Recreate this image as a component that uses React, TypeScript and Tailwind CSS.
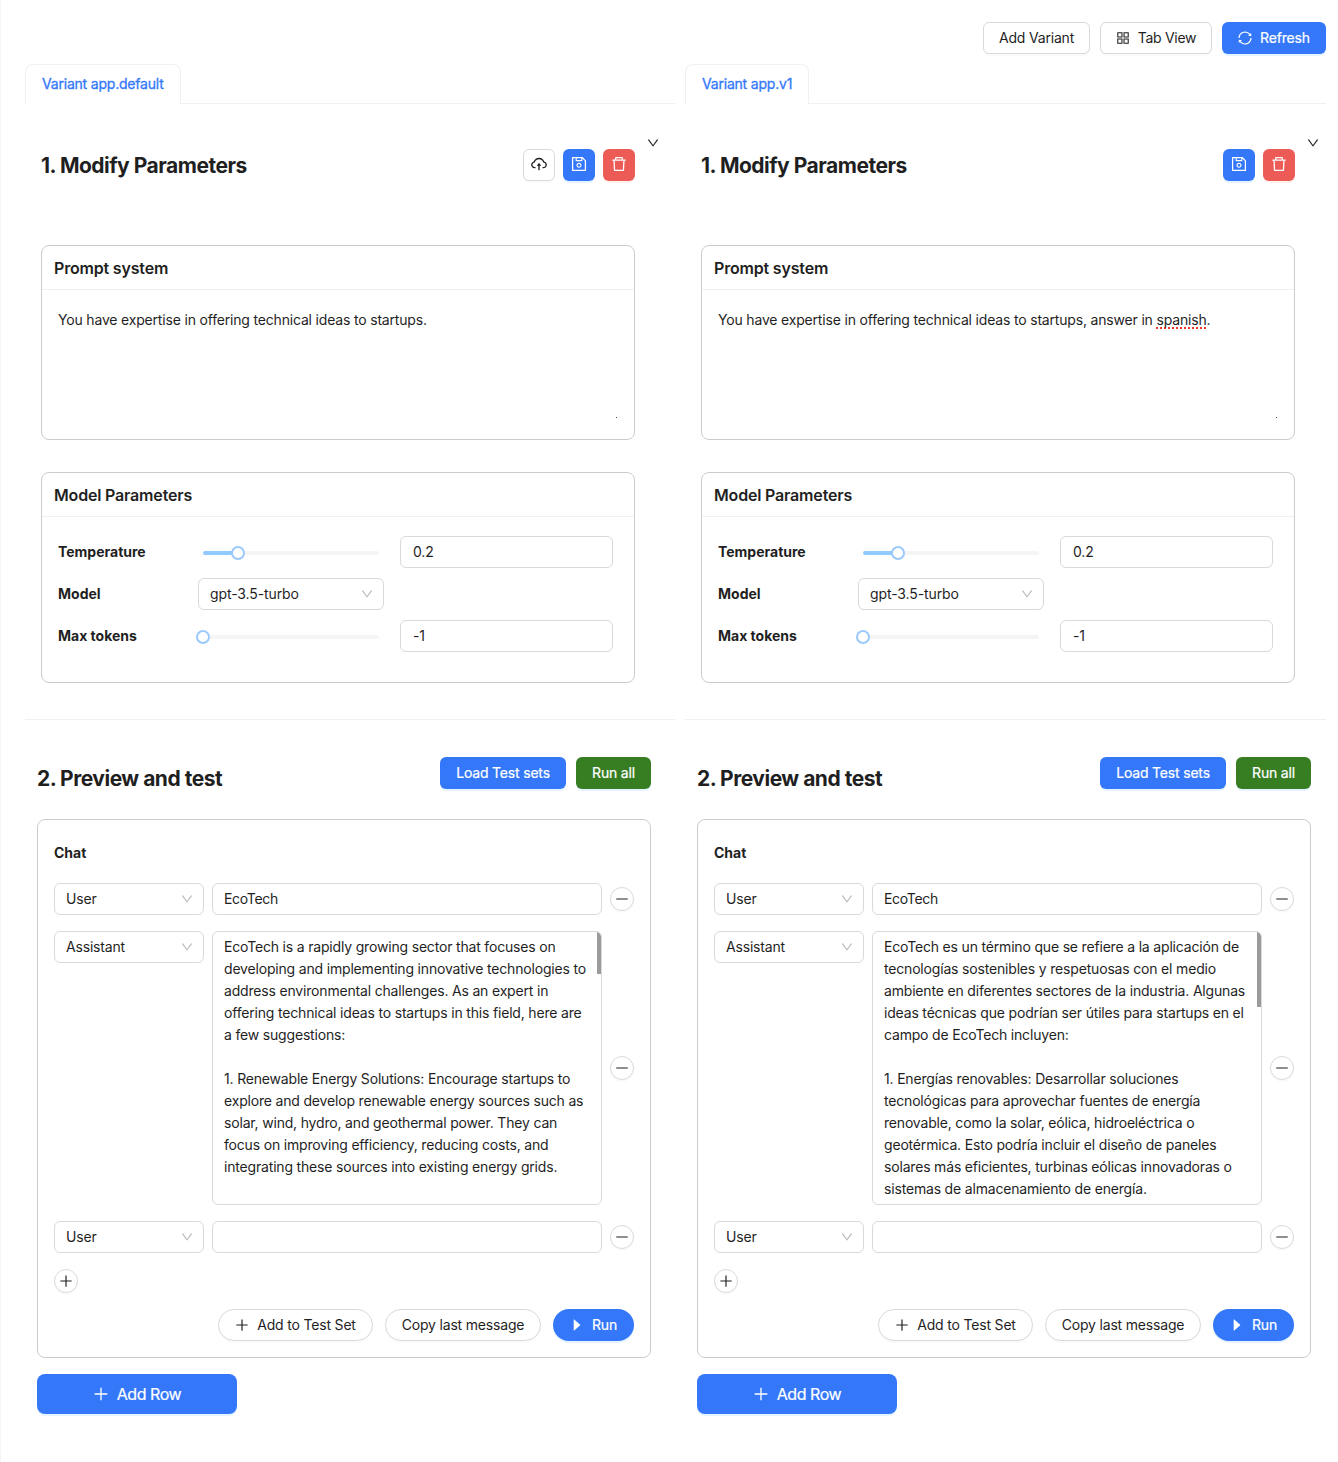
import type { ReactNode } from "react";
import {
  AiFillCaretRight,
  AiOutlineAppstore,
  AiOutlineCloudUpload,
  AiOutlineDelete,
  AiOutlineDown,
  AiOutlineMinus,
  AiOutlinePlus,
  AiOutlineSave,
  AiOutlineSync,
} from "react-icons/ai";

type Variant = {
  tab: string;
  canPublish: boolean;
  prompt: ReactNode;
  answer: string[];
  thumb: string;
};

const variants: Variant[] = [
  {
    tab: "Variant app.default",
    canPublish: true,
    prompt: "You have expertise in offering technical ideas to startups.",
    answer: [
      "EcoTech is a rapidly growing sector that focuses on",
      "developing and implementing innovative technologies to",
      "address environmental challenges. As an expert in",
      "offering technical ideas to startups in this field, here are",
      "a few suggestions:",
      "",
      "1. Renewable Energy Solutions: Encourage startups to",
      "explore and develop renewable energy sources such as",
      "solar, wind, hydro, and geothermal power. They can",
      "focus on improving efficiency, reducing costs, and",
      "integrating these sources into existing energy grids.",
    ],
    thumb: "h-[42px]",
  },
  {
    tab: "Variant app.v1",
    canPublish: false,
    prompt: (
      <>
        You have expertise in offering technical ideas to startups, answer in{" "}
        <span className="underline decoration-[#f0382b] decoration-dotted decoration-2 underline-offset-2 [text-decoration-skip-ink:none]">
          spanish
        </span>
        .
      </>
    ),
    answer: [
      "EcoTech es un término que se refiere a la aplicación de",
      "tecnologías sostenibles y respetuosas con el medio",
      "ambiente en diferentes sectores de la industria. Algunas",
      "ideas técnicas que podrían ser útiles para startups en el",
      "campo de EcoTech incluyen:",
      "",
      "1. Energías renovables: Desarrollar soluciones",
      "tecnológicas para aprovechar fuentes de energía",
      "renovable, como la solar, eólica, hidroeléctrica o",
      "geotérmica. Esto podría incluir el diseño de paneles",
      "solares más eficientes, turbinas eólicas innovadoras o",
      "sistemas de almacenamiento de energía.",
    ],
    thumb: "h-[75px]",
  },
];

const base =
  "flex shrink-0 items-center justify-center whitespace-nowrap";
const outlined =
  "border border-[#d9d9d9] bg-white shadow-[0_2px_0_rgba(0,0,0,0.02)]";
const primary =
  "bg-[#3478f9] text-white shadow-[0_2px_0_rgba(5,145,255,0.1)] [-webkit-text-stroke:0.2px_#ffffff]";

function Select({ value, className }: { value: string; className: string }) {
  return (
    <div
      className={`flex h-8 shrink-0 items-center justify-between rounded-md border border-[#d9d9d9] pr-[9px] pl-[11px] ${className}`}
    >
      <span>{value}</span>
      <AiOutlineDown className="size-[14px] text-[#b8b8b8]" />
    </div>
  );
}

function Slider({ filled }: { filled: boolean }) {
  return (
    <div className="relative h-1 w-[176px] rounded-sm bg-[#f5f5f5]">
      {filled && <div className="h-1 w-[36px] rounded-sm bg-[#91caff]" />}
      <div
        className={`absolute -top-[5px] size-[14px] rounded-full border-2 border-[#9bc9fb] bg-white ${
          filled ? "left-[28px]" : "-left-[7px]"
        }`}
      />
    </div>
  );
}

function Card({ title, className, children }: { title: string; className: string; children: ReactNode }) {
  return (
    <div className={`w-[594px] rounded-lg border border-[#cccccc] ${className}`}>
      <div className="flex h-[44px] items-center border-b border-[#f0f0f0] px-3 text-[16px] font-semibold">
        {title}
      </div>
      {children}
    </div>
  );
}

function RemoveButton() {
  return (
    <button className={`${base} ${outlined} size-6 rounded-full`}>
      <AiOutlineMinus className="size-4" />
    </button>
  );
}

function Param({ label, children }: { label: string; children: ReactNode }) {
  return (
    <div className="flex h-8 items-center">
      <div className="w-[140px] font-bold tracking-[0px]">{label}</div>
      {children}
    </div>
  );
}

function VariantPanel({ v }: { v: Variant }) {
  return (
    <section className="w-full">
      <div className="flex h-10 items-end">
        <div className="flex h-10 items-center rounded-t-lg border border-b-0 border-[#f0f0f0] px-4 pb-[2px] tracking-[-0.2px] text-[#3478f9] [-webkit-text-stroke:0.3px_#3478f9]">
          {v.tab}
        </div>
        <div className="h-px flex-1 bg-[#f0f0f0]" />
      </div>

      <div className="relative pt-[45px] pl-4">
        <AiOutlineDown className="absolute top-[32px] left-[621px] size-[14px]" />
        <div className="flex h-8 w-[594px] items-center justify-between">
          <h2 className="pt-[2px] text-[21px] font-bold tracking-[-0.5px]">1. Modify Parameters</h2>
          <div className="flex gap-2 text-[18px]">
            {v.canPublish && (
              <button className={`${base} ${outlined} size-8 rounded-md pb-[2px]`}>
                <AiOutlineCloudUpload />
              </button>
            )}
            <button className={`${base} ${primary} size-8 rounded-md pb-[2px]`}>
              <AiOutlineSave className="[-webkit-text-stroke:0]" />
            </button>
            <button className={`${base} size-8 rounded-md bg-[#ec5b56] pb-[2px] text-white shadow-[0_2px_0_rgba(255,38,5,0.06)]`}>
              <AiOutlineDelete />
            </button>
          </div>
        </div>

        <Card title="Prompt system" className="mt-16 h-[195px]">
          <div className="relative h-[149px] px-4 pt-[19px] leading-[22px]">
            {v.prompt}
            <div className="absolute right-[17px] bottom-[21px] size-px bg-[#444]" />
          </div>
        </Card>

        <Card title="Model Parameters" className="mt-8 h-[211px]">
          <div className="flex flex-col gap-[10px] px-4 pt-[19px]">
            <Param label="Temperature">
              <div className="mt-[2px] mr-[21px] ml-[5px]">
                <Slider filled />
              </div>
              <div className="flex h-8 w-[213px] items-center rounded-md border border-[#d9d9d9] px-3">0.2</div>
            </Param>
            <Param label="Model">
              <Select value="gpt-3.5-turbo" className="w-[186px] tracking-[-0.1px]" />
            </Param>
            <Param label="Max tokens">
              <div className="mt-[2px] mr-[21px] ml-[5px]">
                <Slider filled={false} />
              </div>
              <div className="flex h-8 w-[213px] items-center rounded-md border border-[#d9d9d9] px-3">-1</div>
            </Param>
          </div>
        </Card>
      </div>

      <div className="mt-9 h-px bg-[#f0f0f0]" />

      <div className="w-[626px] pt-[37px] pl-3">
        <div className="flex h-[43px] items-center justify-between">
          <h2 className="text-[21px] font-bold tracking-[-0.5px]">2. Preview and test</h2>
          <div className="flex gap-[10px] self-start">
            <button className={`${base} ${primary} h-8 w-[126px] rounded-md`}>Load Test sets</button>
            <button className={`${base} h-8 w-[75px] rounded-md bg-[#377e22] text-white shadow-[0_2px_0_rgba(5,145,255,0.1)] [-webkit-text-stroke:0.2px_#ffffff]`}>
              Run all
            </button>
          </div>
        </div>

        <div className="mt-[19px] h-[539px] rounded-lg border border-[#cccccc] px-4 pt-[22px]">
          <div className="h-[22px] leading-[22px] font-bold tracking-[0px]">Chat</div>
          <div className="mt-[19px] flex items-center gap-2">
            <Select value="User" className="w-[150px]" />
            <div className="flex h-8 w-[390px] items-center rounded-md border border-[#d9d9d9] px-[11px] tracking-[-0.3px]">EcoTech</div>
            <RemoveButton />
          </div>
          <div className="mt-4 flex items-center gap-2">
            <Select value="Assistant" className="w-[150px] self-start" />
            <div className="relative h-[274px] w-[390px] overflow-hidden rounded-md border border-[#d9d9d9] px-[11px] pt-[4px]">
              {v.answer.map((line, i) => (
                <p key={i} className="h-[22px] leading-[22px] whitespace-nowrap">
                  {line}
                </p>
              ))}
              <div className={`absolute top-0 right-0 w-1 bg-[#9b9b9b] ${v.thumb}`} />
            </div>
            <RemoveButton />
          </div>
          <div className="mt-4 flex items-center gap-2">
            <Select value="User" className="w-[150px]" />
            <div className="h-8 w-[390px] rounded-md border border-[#d9d9d9]" />
            <RemoveButton />
          </div>
          <button className={`${base} ${outlined} mt-4 size-6 rounded-full`}>
            <AiOutlinePlus className="size-4" />
          </button>
          <div className="mt-4 flex justify-end gap-3">
            <button className={`${base} ${outlined} h-8 w-[155px] gap-[7px] rounded-full`}>
              <AiOutlinePlus className="-ml-px size-4" />
              Add to Test Set
            </button>
            <button className={`${base} ${outlined} h-8 w-[156px] rounded-full`}>Copy last message</button>
            <button className={`${base} ${primary} h-8 w-[81px] gap-[7px] rounded-full`}>
              <AiFillCaretRight className="-ml-px size-4" />
              Run
            </button>
          </div>
        </div>

        <button className={`${base} ${primary} mt-4 h-10 w-[200px] gap-[7px] rounded-lg text-[16px] tracking-[-0.45px]`}>
          <AiOutlinePlus className="-ml-px size-[18px] [-webkit-text-stroke:0]" />
          Add Row
        </button>
      </div>
    </section>
  );
}

export default function App() {
  return (
    <div className="h-[1462px] w-[1338px] overflow-hidden border-l border-[#f5f5f5] bg-white pt-[22px] pr-3 pl-6 font-['Inter',sans-serif] text-[14px] leading-[22px] tracking-[-0.18px] text-[#1f1f1f]">
      <div className="flex justify-end gap-[10px]">
        <button className={`${base} ${outlined} h-8 w-[107px] rounded-md`}>Add Variant</button>
        <button className={`${base} ${outlined} h-8 w-[112px] gap-[7px] rounded-md tracking-[-0.3px]`}>
          <AiOutlineAppstore className="-ml-px size-4" />
          Tab View
        </button>
        <button className={`${base} ${primary} h-8 w-[104px] gap-[7px] rounded-md`}>
          <AiOutlineSync className="-ml-px size-4 [-webkit-text-stroke:0]" />
          Refresh
        </button>
      </div>
      <main className="mt-[10px] grid grid-cols-[650px_641px] gap-[10px]">
        {variants.map((v) => (
          <VariantPanel key={v.tab} v={v} />
        ))}
      </main>
    </div>
  );
}
